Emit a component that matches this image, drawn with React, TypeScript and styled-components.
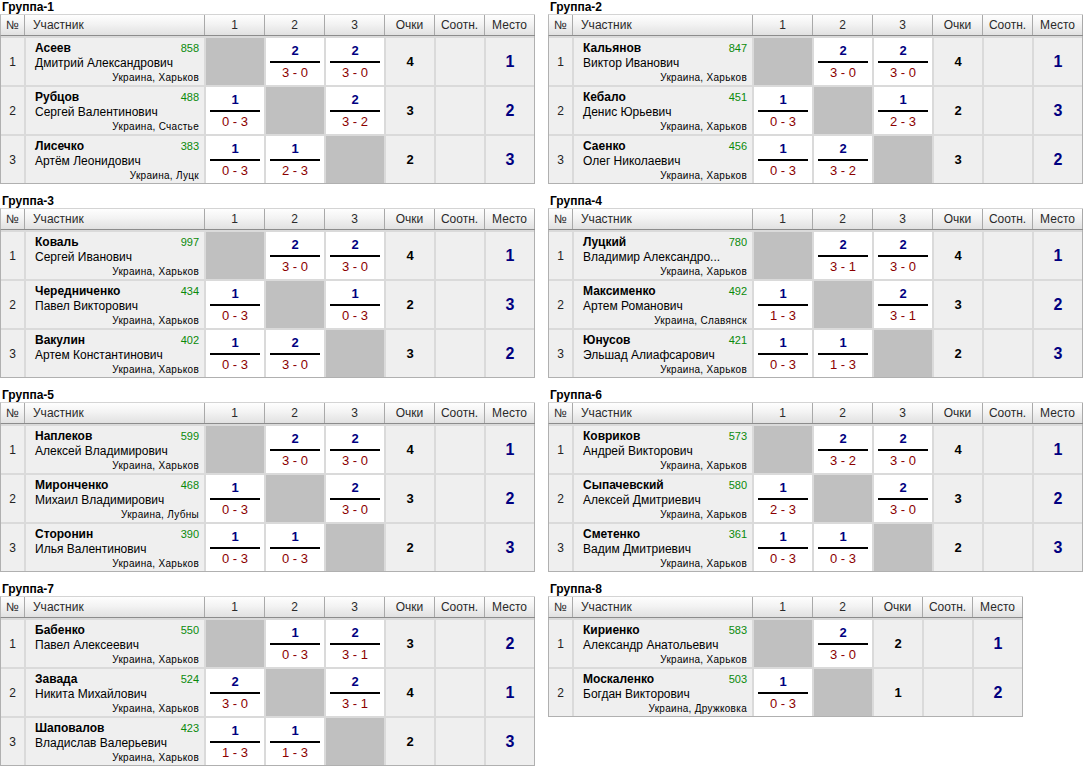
import React from "react";
import styled, { createGlobalStyle } from "styled-components";

const GlobalStyle = createGlobalStyle`
  body {
    margin: 0;
    background: #ffffff;
    font-family: "Liberation Sans", Arial, sans-serif;
    color: #000;
  }
`;

type Result = { pts: number; score: string } | null;

interface Player {
  surname: string;
  name: string;
  rating: number;
  city: string;
  results: Result[];
  points: number;
  place: number;
}

interface Group {
  title: string;
  players: Player[];
}

const r = (pts: number, score: string): Result => ({ pts, score });

const groups: Group[] = [
  {
    title: "Группа-1",
    players: [
      { surname: "Асеев", name: "Дмитрий Александрович", rating: 858, city: "Украина, Харьков", results: [null, r(2, "3 - 0"), r(2, "3 - 0")], points: 4, place: 1 },
      { surname: "Рубцов", name: "Сергей Валентинович", rating: 488, city: "Украина, Счастье", results: [r(1, "0 - 3"), null, r(2, "3 - 2")], points: 3, place: 2 },
      { surname: "Лисечко", name: "Артём Леонидович", rating: 383, city: "Украина, Луцк", results: [r(1, "0 - 3"), r(1, "2 - 3"), null], points: 2, place: 3 },
    ],
  },
  {
    title: "Группа-2",
    players: [
      { surname: "Кальянов", name: "Виктор Иванович", rating: 847, city: "Украина, Харьков", results: [null, r(2, "3 - 0"), r(2, "3 - 0")], points: 4, place: 1 },
      { surname: "Кебало", name: "Денис Юрьевич", rating: 451, city: "Украина, Харьков", results: [r(1, "0 - 3"), null, r(1, "2 - 3")], points: 2, place: 3 },
      { surname: "Саенко", name: "Олег Николаевич", rating: 456, city: "Украина, Харьков", results: [r(1, "0 - 3"), r(2, "3 - 2"), null], points: 3, place: 2 },
    ],
  },
  {
    title: "Группа-3",
    players: [
      { surname: "Коваль", name: "Сергей Иванович", rating: 997, city: "Украина, Харьков", results: [null, r(2, "3 - 0"), r(2, "3 - 0")], points: 4, place: 1 },
      { surname: "Чередниченко", name: "Павел Викторович", rating: 434, city: "Украина, Харьков", results: [r(1, "0 - 3"), null, r(1, "0 - 3")], points: 2, place: 3 },
      { surname: "Вакулин", name: "Артем Константинович", rating: 402, city: "Украина, Харьков", results: [r(1, "0 - 3"), r(2, "3 - 0"), null], points: 3, place: 2 },
    ],
  },
  {
    title: "Группа-4",
    players: [
      { surname: "Луцкий", name: "Владимир Александро...", rating: 780, city: "Украина, Харьков", results: [null, r(2, "3 - 1"), r(2, "3 - 0")], points: 4, place: 1 },
      { surname: "Максименко", name: "Артем Романович", rating: 492, city: "Украина, Славянск", results: [r(1, "1 - 3"), null, r(2, "3 - 1")], points: 3, place: 2 },
      { surname: "Юнусов", name: "Эльшад Алиафсарович", rating: 421, city: "Украина, Харьков", results: [r(1, "0 - 3"), r(1, "1 - 3"), null], points: 2, place: 3 },
    ],
  },
  {
    title: "Группа-5",
    players: [
      { surname: "Наплеков", name: "Алексей Владимирович", rating: 599, city: "Украина, Харьков", results: [null, r(2, "3 - 0"), r(2, "3 - 0")], points: 4, place: 1 },
      { surname: "Миронченко", name: "Михаил Владимирович", rating: 468, city: "Украина, Лубны", results: [r(1, "0 - 3"), null, r(2, "3 - 0")], points: 3, place: 2 },
      { surname: "Сторонин", name: "Илья Валентинович", rating: 390, city: "Украина, Харьков", results: [r(1, "0 - 3"), r(1, "0 - 3"), null], points: 2, place: 3 },
    ],
  },
  {
    title: "Группа-6",
    players: [
      { surname: "Ковриков", name: "Андрей Викторович", rating: 573, city: "Украина, Харьков", results: [null, r(2, "3 - 2"), r(2, "3 - 0")], points: 4, place: 1 },
      { surname: "Сыпачевский", name: "Алексей Дмитриевич", rating: 580, city: "Украина, Харьков", results: [r(1, "2 - 3"), null, r(2, "3 - 0")], points: 3, place: 2 },
      { surname: "Сметенко", name: "Вадим Дмитриевич", rating: 361, city: "Украина, Харьков", results: [r(1, "0 - 3"), r(1, "0 - 3"), null], points: 2, place: 3 },
    ],
  },
  {
    title: "Группа-7",
    players: [
      { surname: "Бабенко", name: "Павел Алексеевич", rating: 550, city: "Украина, Харьков", results: [null, r(1, "0 - 3"), r(2, "3 - 1")], points: 3, place: 2 },
      { surname: "Завада", name: "Никита Михайлович", rating: 524, city: "Украина, Харьков", results: [r(2, "3 - 0"), null, r(2, "3 - 1")], points: 4, place: 1 },
      { surname: "Шаповалов", name: "Владислав Валерьевич", rating: 423, city: "Украина, Харьков", results: [r(1, "1 - 3"), r(1, "1 - 3"), null], points: 2, place: 3 },
    ],
  },
  {
    title: "Группа-8",
    players: [
      { surname: "Кириенко", name: "Александр Анатольевич", rating: 583, city: "Украина, Харьков", results: [null, r(2, "3 - 0")], points: 2, place: 1 },
      { surname: "Москаленко", name: "Богдан Викторович", rating: 503, city: "Украина, Дружковка", results: [r(1, "0 - 3"), null], points: 1, place: 2 },
    ],
  },
];

const Page = styled.div`
  display: grid;
  grid-template-columns: 535px 535px;
  column-gap: 13px;
  row-gap: 10px;
  align-items: start;
`;

const Block = styled.div`
  display: flex;
  flex-direction: column;
  align-items: flex-start;
`;

const Title = styled.div`
  height: 14px;
  line-height: 14px;
  padding-left: 2px;
  font-size: 12px;
  font-weight: bold;
`;

const HeadRow = styled.div<{ $n: number }>`
  display: grid;
  grid-template-columns: 24px 180px repeat(${(p) => p.$n}, 60px) 50px 50px 50px;
  height: 22px;
  border-left: 1px solid #b8b8b8;
  border-top: 1px solid #d4d4d4;
  border-bottom: 1px solid #8c8c8c;
  box-sizing: border-box;
  background: linear-gradient(#fefefe, #f3f3f3 45%, #e1e1e1);
`;

const HeadCell = styled.div<{ $left?: boolean }>`
  border-right: 1px solid #a9a9a9;
  font-size: 12px;
  line-height: 20px;
  color: #2a2a2a;
  text-align: ${(p) => (p.$left ? "left" : "center")};
  padding-left: ${(p) => (p.$left ? "8px" : "0")};
`;

const Body = styled.div<{ $n: number }>`
  display: grid;
  grid-template-columns: 23px 178px repeat(${(p) => p.$n}, 58px) 48px 48px 48px;
  grid-auto-rows: 47px;
  gap: 2px;
  padding-top: 2px;
  background: #dadada;
  border: 1px solid #b0b0b0;
  border-top: none;
`;

const Cell = styled.div<{ $tone?: "plain" | "white" | "blank" }>`
  background: ${(p) =>
    p.$tone === "white" ? "#ffffff" : p.$tone === "blank" ? "#c0c0c0" : "#efefef"};
  display: flex;
  align-items: center;
  justify-content: center;
`;

const Num = styled(Cell)`
  font-size: 12px;
  color: #222;
`;

const Who = styled(Cell)`
  flex-direction: column;
  align-items: stretch;
  justify-content: flex-start;
  padding: 3px 5px 1px 9px;
`;

const TopLine = styled.div`
  display: flex;
  justify-content: space-between;
  align-items: baseline;
  line-height: 15px;
`;

const Surname = styled.span`
  font-size: 12px;
  font-weight: bold;
`;

const Rating = styled.span`
  font-size: 11px;
  color: #0a8a0a;
`;

const Name = styled.div`
  font-size: 12px;
  line-height: 15px;
  white-space: nowrap;
`;

const City = styled.div`
  margin-top: auto;
  align-self: flex-end;
  font-size: 10px;
  line-height: 12px;
  letter-spacing: 0.3px;
`;

const Game = styled(Cell)`
  flex-direction: column;
`;

const GamePts = styled.div`
  font-size: 13px;
  font-weight: bold;
  line-height: 15px;
  color: #000080;
`;

const Rule = styled.div`
  width: 50px;
  height: 2px;
  background: #000;
  margin: 3px 0 2px;
`;

const GameScore = styled.div`
  font-size: 13px;
  line-height: 15px;
  color: #8b0000;
`;

const Points = styled(Cell)`
  font-size: 13px;
  font-weight: bold;
`;

const Place = styled(Cell)`
  font-size: 16px;
  font-weight: bold;
  color: #000080;
`;

const GroupTable: React.FC<{ group: Group }> = ({ group }) => {
  const n = group.players.length;
  return (
    <Block>
      <Title>{group.title}</Title>
      <HeadRow $n={n}>
        <HeadCell>№</HeadCell>
        <HeadCell $left>Участник</HeadCell>
        {group.players.map((_, i) => (
          <HeadCell key={i}>{i + 1}</HeadCell>
        ))}
        <HeadCell>Очки</HeadCell>
        <HeadCell>Соотн.</HeadCell>
        <HeadCell>Место</HeadCell>
      </HeadRow>
      <Body $n={n}>
        {group.players.map((p, i) => (
          <React.Fragment key={p.surname}>
            <Num>{i + 1}</Num>
            <Who>
              <TopLine>
                <Surname>{p.surname}</Surname>
                <Rating>{p.rating}</Rating>
              </TopLine>
              <Name>{p.name}</Name>
              <City>{p.city}</City>
            </Who>
            {p.results.map((res, j) =>
              res ? (
                <Game key={j} $tone="white">
                  <GamePts>{res.pts}</GamePts>
                  <Rule />
                  <GameScore>{res.score}</GameScore>
                </Game>
              ) : (
                <Cell key={j} $tone="blank" />
              )
            )}
            <Points>{p.points}</Points>
            <Cell />
            <Place>{p.place}</Place>
          </React.Fragment>
        ))}
      </Body>
    </Block>
  );
};

export default function App() {
  return (
    <>
      <GlobalStyle />
      <Page>
        {groups.map((g) => (
          <GroupTable key={g.title} group={g} />
        ))}
      </Page>
    </>
  );
}
